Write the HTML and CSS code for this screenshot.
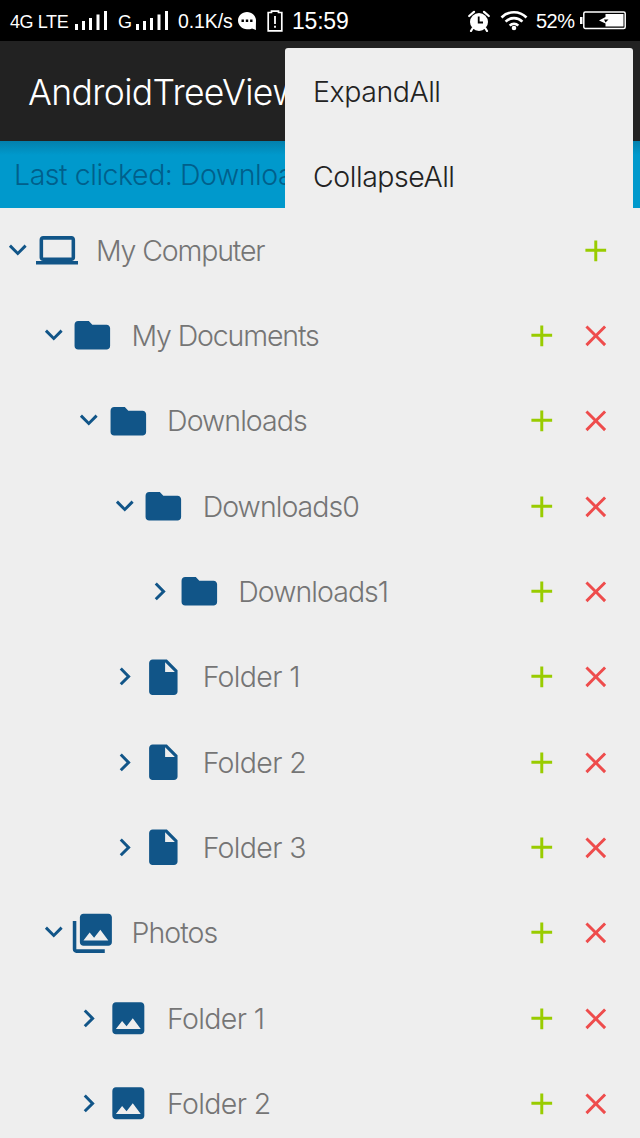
FILE: index.html
```
<!DOCTYPE html>
<html lang="en">
<head>
<meta charset="utf-8">
<title>AndroidTreeView</title>
<link rel="stylesheet" href="styles.css">
</head>
<body>
<svg class="defs" aria-hidden="true">
  <symbol id="down" viewBox="0 0 24 24"><path d="M7.41 7.840 12 12.420l4.590-4.580L18 9.250l-6 6-6-6z"/></symbol>
  <symbol id="right" viewBox="0 0 24 24"><path d="M8.590 16.340 13.170 11.750 8.590 7.160 10 5.750l6 6-6 6z"/></symbol>
  <symbol id="laptop" viewBox="0 0 24 24"><path d="M20 18c1.100 0 2-.9 2-2V6c0-1.100-.9-2-2-2H4c-1.100 0-2 .9-2 2v10c0 1.100.9 2 2 2H0v2h24v-2zM4 6h16v10H4z"/></symbol>
  <symbol id="folder" viewBox="0 0 24 24"><path d="M10 4H4c-1.100 0-2 .9-2 2v12c0 1.100.9 2 2 2h16c1.100 0 2-.9 2-2V8c0-1.100-.9-2-2-2h-8z"/></symbol>
  <symbol id="file" viewBox="0 0 24 24"><path d="M6 2c-1.100 0-2 .9-2 2v16c0 1.100.9 2 2 2h12c1.100 0 2-.9 2-2V8l-6-6zm7 7V3.500L18.500 9z"/></symbol>
  <symbol id="photo" viewBox="0 0 24 24"><path d="M21 19V5c0-1.100-.9-2-2-2H5c-1.100 0-2 .9-2 2v14c0 1.100.9 2 2 2h14c1.100 0 2-.9 2-2zM8.500 13.500l2.500 3.010L14.500 12l4.500 6H5z"/></symbol>
  <symbol id="photos" viewBox="0 0 24 24"><path d="M1 5v16c0 1.100.9 2 2 2h16v-2H3V5zM21 1H7c-1.100 0-2 .9-2 2v14c0 1.100.9 2 2 2h14c1.100 0 2-.9 2-2V3c0-1.100-.9-2-2-2zM7 16l3.500-4.500 2.500 3.010L16.500 10l4.500 6z"/></symbol>
  <symbol id="plus" viewBox="0 0 24 24"><path d="M19 12.700h-6V19h-2v-6.300H5v-2h6V5h2v5.700h6z"/></symbol>
  <symbol id="cross" viewBox="0 0 24 24"><path d="M19 6.410 17.590 5 12 10.590 6.410 5 5 6.410 10.590 12 5 17.590 6.410 19 12 13.410 17.590 19 19 17.590 13.410 12z"/></symbol>
  <symbol id="signal" viewBox="0 0 33 21"><path d="M0 14h3v6H0zM7 11h3v9H7zM14 8h3v12h-3zM21.500 4.500h3V20h-3zM29 1h3v19h-3z"/></symbol>
</svg>
<div class="screen">
  <div class="status">
    <span class="net">4G LTE</span>
    <svg class="bars"><use href="#signal"/></svg>
    <span class="net g">G</span>
    <svg class="bars"><use href="#signal"/></svg>
    <span class="speed">0.1K/s</span>
    <svg class="chat" viewBox="0 0 20 20"><path fill="#fff" d="M10 1c5 0 9 3.800 9 8.500 0 3-.3 5.500 0 9.500l-4-1.600c-1.500.6-3 .8-5 .8-5 0-9-4-9-8.700S5 1 10 1z"/><path d="M4.500 8.500h2.400v2.400H4.500zM8.800 8.500h2.400v2.400H8.800zM13.100 8.500h2.400v2.400h-2.400z"/></svg>
    <svg class="sim" viewBox="0 0 16 22"><path d="M1.200 2.500h3.300V1.200h7v1.300h3.300v18.300H1.200z" fill="none" stroke="#fff" stroke-width="1.700"/><path d="M7.100 6h1.800v8H7.100zM7.100 15.800h1.800v2H7.100z" fill="#fff"/></svg>
    <span class="clock">15:59</span>
    <svg class="alarm" viewBox="0 0 22 22"><circle cx="11" cy="12" r="9" fill="#fff"/><path d="M1.200 6 6 1.800M20.800 6 16 1.800M4.500 18.500 3 21M17.500 18.500 19 21" stroke="#fff" stroke-width="2.200" stroke-linecap="round"/><path d="M10.700 6.500v6H15" fill="none" stroke="#000" stroke-width="1.800"/></svg>
    <svg class="wifi" viewBox="0 0 28 21"><g fill="none" stroke="#fff" stroke-width="2.600"><path d="M1.500 7.500C8.500.5 19.500.5 26.500 7.500M5.600 11.700c4.800-4.800 12-4.800 16.800 0M9.700 15.700c2.500-2.500 6.100-2.500 8.600 0"/></g><circle cx="14" cy="18" r="2.300" fill="#fff"/></svg>
    <span class="percent">52%</span>
    <svg class="battery" viewBox="0 0 46 19"><rect x="3.800" y="1" width="41.400" height="16.500" rx="1.500" fill="none" stroke="#fff" stroke-width="1.500"/><path d="M0 6h2.500v7H0zM25.500 3H43.500v12.500H25.500v-3l-6.500-3 6.500-3.500z" fill="#fff"/><path d="M24 8.500h4.500l-3 3z"/></svg>
  </div>
  <header class="toolbar">AndroidTreeView</header>
  <div class="last">Last clicked: Downloads</div>
  <main class="tree">
    <div class="row"><svg class="arrow"><use href="#down"/></svg><svg class="icon"><use href="#laptop"/></svg><span class="label tight">My Computer</span><svg class="add"><use href="#plus"/></svg></div>
    <div class="row l1"><svg class="arrow"><use href="#down"/></svg><svg class="icon"><use href="#folder"/></svg><span class="label tight">My Documents</span><svg class="add"><use href="#plus"/></svg><svg class="del"><use href="#cross"/></svg></div>
    <div class="row l2"><svg class="arrow"><use href="#down"/></svg><svg class="icon"><use href="#folder"/></svg><span class="label">Downloads</span><svg class="add"><use href="#plus"/></svg><svg class="del"><use href="#cross"/></svg></div>
    <div class="row l3"><svg class="arrow"><use href="#down"/></svg><svg class="icon"><use href="#folder"/></svg><span class="label">Downloads0</span><svg class="add"><use href="#plus"/></svg><svg class="del"><use href="#cross"/></svg></div>
    <div class="row l4"><svg class="arrow"><use href="#right"/></svg><svg class="icon"><use href="#folder"/></svg><span class="label">Downloads1</span><svg class="add"><use href="#plus"/></svg><svg class="del"><use href="#cross"/></svg></div>
    <div class="row l3"><svg class="arrow"><use href="#right"/></svg><svg class="icon"><use href="#file"/></svg><span class="label loose">Folder 1</span><svg class="add"><use href="#plus"/></svg><svg class="del"><use href="#cross"/></svg></div>
    <div class="row l3"><svg class="arrow"><use href="#right"/></svg><svg class="icon"><use href="#file"/></svg><span class="label loose">Folder 2</span><svg class="add"><use href="#plus"/></svg><svg class="del"><use href="#cross"/></svg></div>
    <div class="row l3"><svg class="arrow"><use href="#right"/></svg><svg class="icon"><use href="#file"/></svg><span class="label loose">Folder 3</span><svg class="add"><use href="#plus"/></svg><svg class="del"><use href="#cross"/></svg></div>
    <div class="row l1"><svg class="arrow"><use href="#down"/></svg><svg class="icon"><use href="#photos"/></svg><span class="label">Photos</span><svg class="add"><use href="#plus"/></svg><svg class="del"><use href="#cross"/></svg></div>
    <div class="row l2"><svg class="arrow"><use href="#right"/></svg><svg class="icon"><use href="#photo"/></svg><span class="label loose">Folder 1</span><svg class="add"><use href="#plus"/></svg><svg class="del"><use href="#cross"/></svg></div>
    <div class="row l2"><svg class="arrow"><use href="#right"/></svg><svg class="icon"><use href="#photo"/></svg><span class="label loose">Folder 2</span><svg class="add"><use href="#plus"/></svg><svg class="del"><use href="#cross"/></svg></div>
  </main>
  <div class="menu"><div class="item">ExpandAll</div><div class="item">CollapseAll</div></div>
</div>
</body>
</html>
```
FILE: styles.css
```
* { box-sizing: border-box; }
body { margin: 0; background: #eee; font-family: Inter, Roboto, "Liberation Sans", sans-serif; font-weight: 300; }
.defs { position: absolute; width: 0; height: 0; }
.screen { position: relative; width: 640px; height: 1138px; overflow: hidden; }
.status { height: 41px; background: #000; color: #fff; display: flex; align-items: center; padding: 0 14px 0 10px; font-family: "Liberation Sans", sans-serif; font-weight: 400; white-space: nowrap; }
.status span, .status svg { flex: none; }
.net { width: 65px; font-size: 18px; letter-spacing: -0.4px; padding-top: 4px; }
.net.g { width: 18px; margin-left: 10px; }
.bars { width: 33px; height: 21px; fill: #fff; }
.speed { width: 54px; margin-left: 9px; font-size: 19.5px; padding-top: 1px; letter-spacing: -0.1px; }
.chat { width: 20px; height: 20px; margin-left: 5px; }
.sim { width: 16px; height: 22px; margin-left: 10px; }
.clock { width: 58px; margin-left: 9px; font-size: 23px; padding-top: 2px; letter-spacing: -0.2px; }
.alarm { width: 22px; height: 22px; margin-left: auto; }
.wifi { width: 28px; height: 21px; margin-left: 10px; }
.percent { width: 39px; margin-left: 8px; font-size: 20px; padding-top: 2px; letter-spacing: -0.5px; }
.battery { width: 46px; height: 19px; margin-left: 5px; }
.toolbar { height: 100px; background: #222; color: #fff; padding-left: 28px; font-size: 35.5px; line-height: 103px; letter-spacing: -0.65px; white-space: nowrap; }
.last { height: 66.670px; padding-left: 14px; background: linear-gradient(#0380ad, #0099cc 14px); color: #005f8b; font-size: 28.5px; line-height: 68px; letter-spacing: -0.45px; white-space: nowrap; }
.row { height: 85.330px; display: flex; align-items: center; padding-right: 26.670px; }
.l1 { padding-left: 35.560px; }
.l2 { padding-left: 71.110px; }
.l3 { padding-left: 106.670px; }
.l4 { padding-left: 142.220px; }
.arrow { width: 35.560px; height: 35.560px; fill: #115588; }
.icon { width: 42.670px; height: 42.670px; fill: #115588; }
.label { flex: 1; margin-left: 17.780px; color: #757575; font-size: 28.5px; letter-spacing: -0.95px; white-space: nowrap; }
.label.tight { letter-spacing: -1.15px; }
.label.loose { letter-spacing: -0.65px; }
.add, .del { width: 35.560px; height: 35.560px; }
.add { fill: #99cc00; }
.del { fill: #ee4c4c; margin-left: 17.780px; }
.menu { position: absolute; left: 284.5px; top: 48px; width: 348.5px; height: 171px; background: #eee; border-radius: 3px; color: #222; font-size: 28.5px; letter-spacing: -0.45px; }
.item { height: 85.330px; line-height: 88px; padding-left: 28.5px; }
```
